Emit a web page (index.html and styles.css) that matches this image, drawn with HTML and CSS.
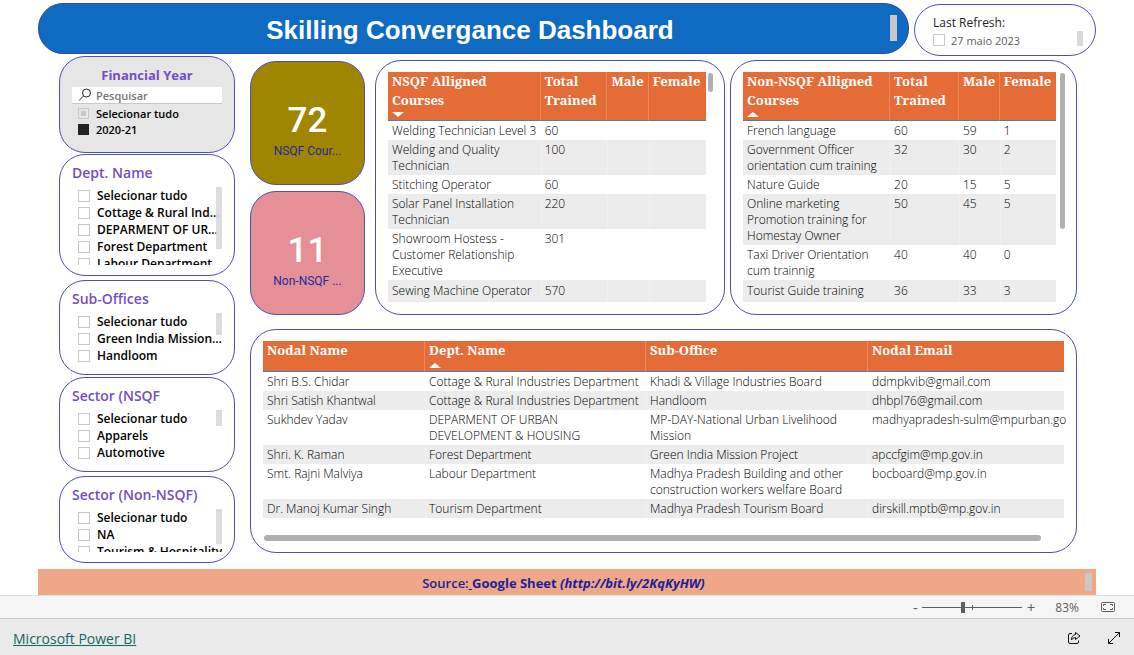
FILE: index.html
```html
<!DOCTYPE html>
<html lang="pt">
<head>
<meta charset="utf-8">
<title>Skilling Convergance Dashboard</title>
<link rel="stylesheet" href="styles.css">
</head>
<body>
<main class="report">
  <header class="top">
    <div class="title-bar"><h1>Skilling Convergance Dashboard</h1><span class="thumb title-thumb"></span></div>
    <section class="card refresh">
      <h2 class="refresh-title">Last Refresh:</h2>
      <label class="option refresh-option"><input type="checkbox" class="tick">27 maio 2023</label>
      <span class="thumb refresh-thumb"></span>
    </section>
  </header>

  <div class="content">
    <aside class="filters">
      <section class="card slicer year">
        <h2 class="slicer-title centered">Financial Year</h2>
        <div class="search">
          <svg class="search-icon" viewBox="0 0 14 14" width="14" height="14"><circle cx="8.5" cy="5" r="4" /><path d="M5.5 8 1 12.500" /></svg>
          <input type="text" placeholder="Pesquisar" aria-label="Pesquisar">
        </div>
        <label class="option"><input type="checkbox" class="tick partial"><span>Selecionar tudo</span></label>
        <label class="option"><input type="checkbox" class="tick" checked><span>2020-21</span></label>
      </section>
      <section class="card slicer dept">
        <h2 class="slicer-title">Dept. Name</h2>
        <div class="list">
          <label class="option"><input type="checkbox" class="tick"><span>Selecionar tudo</span></label>
          <label class="option"><input type="checkbox" class="tick"><span>Cottage &amp; Rural Ind...</span></label>
          <label class="option"><input type="checkbox" class="tick"><span>DEPARMENT OF UR...</span></label>
          <label class="option"><input type="checkbox" class="tick"><span>Forest Department</span></label>
          <label class="option"><input type="checkbox" class="tick"><span>Labour Department</span></label>
          <span class="thumb list-thumb tall"></span>
        </div>
      </section>
      <section class="card slicer sub">
        <h2 class="slicer-title">Sub-Offices</h2>
        <div class="list">
          <label class="option"><input type="checkbox" class="tick"><span>Selecionar tudo</span></label>
          <label class="option"><input type="checkbox" class="tick"><span>Green India Mission...</span></label>
          <label class="option"><input type="checkbox" class="tick"><span>Handloom</span></label>
          <span class="thumb list-thumb short"></span>
        </div>
      </section>
      <section class="card slicer sector">
        <h2 class="slicer-title">Sector (NSQF</h2>
        <div class="list">
          <label class="option"><input type="checkbox" class="tick"><span>Selecionar tudo</span></label>
          <label class="option"><input type="checkbox" class="tick"><span>Apparels</span></label>
          <label class="option"><input type="checkbox" class="tick"><span>Automotive</span></label>
          <span class="thumb list-thumb tiny"></span>
        </div>
      </section>
      <section class="card slicer non">
        <h2 class="slicer-title">Sector (Non-NSQF)</h2>
        <div class="list">
          <label class="option"><input type="checkbox" class="tick"><span>Selecionar tudo</span></label>
          <label class="option"><input type="checkbox" class="tick"><span>NA</span></label>
          <label class="option"><input type="checkbox" class="tick"><span>Tourism &amp; Hospitality</span></label>
          <span class="thumb list-thumb medium"></span>
        </div>
      </section>
    </aside>

    <div class="visuals">
      <div class="upper">
        <div class="kpis">
          <section class="card kpi gold"><strong>72</strong><span>NSQF Cour...</span></section>
          <section class="card kpi pink"><strong>11</strong><span>Non-NSQF ...</span></section>
        </div>
        <section class="card table-card">
          <table class="grid">
            <colgroup><col class="c1-name"><col class="c1-total"><col class="c1-male"><col class="c1-female"></colgroup>
            <thead><tr><th>NSQF Alligned Courses<i class="sort down"></i></th><th>Total Trained</th><th>Male</th><th>Female</th></tr></thead>
            <tbody>
              <tr><td class="keep">Welding Technician Level 3</td><td>60</td><td></td><td></td></tr>
              <tr><td>Welding and Quality Technician</td><td>100</td><td></td><td></td></tr>
              <tr><td>Stitching Operator</td><td>60</td><td></td><td></td></tr>
              <tr><td>Solar Panel Installation Technician</td><td>220</td><td></td><td></td></tr>
              <tr><td>Showroom Hostess - Customer Relationship Executive</td><td>301</td><td></td><td></td></tr>
              <tr><td class="keep">Sewing Machine Operator</td><td>570</td><td></td><td></td></tr>
            </tbody>
          </table>
          <span class="bar bar-short"></span>
        </section>
        <section class="card table-card second">
          <table class="grid">
            <colgroup><col class="c2-name"><col class="c2-total"><col class="c2-male"><col class="c2-female"></colgroup>
            <thead><tr><th>Non-NSQF Alligned Courses<i class="sort up"></i></th><th>Total Trained</th><th>Male</th><th>Female</th></tr></thead>
            <tbody>
              <tr><td>French language</td><td>60</td><td>59</td><td>1</td></tr>
              <tr><td>Government Officer orientation cum training</td><td>32</td><td>30</td><td>2</td></tr>
              <tr><td>Nature Guide</td><td>20</td><td>15</td><td>5</td></tr>
              <tr><td>Online marketing Promotion training for Homestay Owner</td><td>50</td><td>45</td><td>5</td></tr>
              <tr><td>Taxi Driver Orientation cum trainnig</td><td>40</td><td>40</td><td>0</td></tr>
              <tr><td>Tourist Guide training</td><td>36</td><td>33</td><td>3</td></tr>
            </tbody>
          </table>
          <span class="bar bar-long"></span>
        </section>
      </div>

      <section class="card nodal">
        <table class="grid">
          <colgroup><col class="c3-name"><col class="c3-dept"><col class="c3-sub"><col class="c3-mail"></colgroup>
          <thead><tr><th>Nodal Name</th><th>Dept. Name<i class="sort up"></i></th><th>Sub-Office</th><th>Nodal Email</th></tr></thead>
          <tbody>
            <tr><td>Shri B.S. Chidar</td><td class="keep">Cottage &amp; Rural Industries Department</td><td>Khadi &amp; Village Industries Board</td><td>ddmpkvib@gmail.com</td></tr>
            <tr><td>Shri Satish Khantwal</td><td class="keep">Cottage &amp; Rural Industries Department</td><td>Handloom</td><td>dhbpl76@gmail.com</td></tr>
            <tr><td>Sukhdev Yadav</td><td>DEPARMENT OF URBAN<br>DEVELOPMENT &amp; HOUSING</td><td>MP-DAY-National Urban Livelihood Mission</td><td class="keep">madhyapradesh-sulm@mpurban.go</td></tr>
            <tr><td>Shri. K. Raman</td><td>Forest Department</td><td>Green India Mission Project</td><td>apccfgim@mp.gov.in</td></tr>
            <tr><td>Smt. Rajni Malviya</td><td>Labour Department</td><td>Madhya Pradesh Building and other construction workers welfare Board</td><td>bocboard@mp.gov.in</td></tr>
            <tr><td>Dr. Manoj Kumar Singh</td><td>Tourism Department</td><td>Madhya Pradesh Tourism Board</td><td>dirskill.mptb@mp.gov.in</td></tr>
          </tbody>
        </table>
        <div class="hscroll"></div>
      </section>
    </div>
  </div>

  <div class="source"><p>Source:<a href="http://bit.ly/2KqKyHW"><u>&nbsp;</u><b>Google Sheet <em>(http://bit.ly/2KqKyHW)</em></b></a></p><span class="thumb source-thumb"></span></div>
</main>

<div class="zoombar">
  <button type="button" class="step" aria-label="Zoom out">-</button>
  <input type="range" class="slider" min="10" max="190" value="83" aria-label="Zoom">
  <button type="button" class="step plus" aria-label="Zoom in">+</button>
  <span class="percent">83%</span>
  <button type="button" class="icon" aria-label="Fit to page">
    <svg viewBox="0 0 14 10" width="14" height="10"><rect x=".5" y=".5" width="13" height="9" rx="1" /><path d="M5 2.500H2.500V4M2.500 6v1.500H5M9 2.500h2.500V4M11.500 6v1.500H9" /></svg>
  </button>
</div>
<footer class="footer">
  <a class="brand" href="https://powerbi.microsoft.com">Microsoft Power BI</a>
  <div class="actions">
    <button type="button" class="icon dark" aria-label="Share">
      <svg viewBox="0 0 14 14" width="14" height="14"><path d="M5 2.500H3Q1.500 2.500 1.500 4v7Q1.500 12.500 3 12.500h7q1.500 0 1.500-1.500V9.500" /><path d="M8.500 1.500 13 5 8.500 8.500V6.500Q6 6.500 4.500 9 4.500 4 8.500 3.500Z" /></svg>
    </button>
    <button type="button" class="icon dark" aria-label="Full screen">
      <svg viewBox="0 0 14 14" width="14" height="14"><path d="M1.500 12.500 12.500 1.500M8 1.500h4.500V6M1.500 8v4.500H6" /></svg>
    </button>
  </div>
</footer>
</body>
</html>
```

FILE: styles.css
```css
* { box-sizing: border-box; }

body {
  margin: 0;
  min-height: 100vh;
  display: flex;
  flex-direction: column;
  background: #fff;
  color: #252423;
  font-family: "Open Sans", "Noto Sans", sans-serif;
  font-size: 12px;
}

h1, h2, p { margin: 0; }
button { border: 0; padding: 0; background: none; font: inherit; color: inherit; }

.report { flex: 1; padding: 3px 38px 0; display: flex; flex-direction: column; }

.top { display: flex; align-items: flex-start; gap: 5px; }
.title-bar {
  flex: 1;
  height: 51px;
  display: flex;
  align-items: center;
  justify-content: center;
  position: relative;
  border: 1px solid #3a44a8;
  border-radius: 25px;
  background: #0f6bc1;
}
.title-bar h1 {
  padding-top: 3px;
  padding-right: 7px;
  color: #fff;
  font: bold 26px "Liberation Sans", Arial, sans-serif;
}

.card { position: relative; border: 1px solid #4a52b4; border-radius: 26px; }
.thumb { position: absolute; background: #d9d9d9; }
.title-thumb { right: 11px; top: 11px; width: 7px; height: 26px; background: #c8c8c8; }

.refresh { width: 182px; height: 52px; margin-top: 1px; padding: 9px 18px; }
.refresh-title { font-size: 12px; font-weight: 400; line-height: 17px; }
.refresh-option { color: #605e5c; font-size: 11px; }
.refresh-thumb { right: 12px; top: 26px; width: 6px; height: 15px; }

.content { display: flex; gap: 15px; padding: 0 19px 0 21px; }
.filters { width: 176px; display: flex; flex-direction: column; }
.slicer { padding: 9px 12px 0; }
.slicer-title {
  height: 23px;
  color: #744ec2;
  font-size: 14px;
  font-weight: 600;
  line-height: 18px;
  white-space: nowrap;
}
.centered { height: 21px; font-size: 13px; font-weight: 700; text-align: center; }
.year { height: 97px; background: #e6e6e6; }
.dept { height: 122px; margin-top: 1px; }
.sub { height: 95px; margin-top: 4px; }
.sector { height: 95px; margin-top: 2px; }
.non { height: 87px; margin-top: 4px; }

.list { position: relative; height: 54px; padding-left: 6px; overflow: hidden; }
.dept .list { height: 78px; }
.non .list { height: 43px; }
.option { display: flex; align-items: center; gap: 6px; height: 18px; white-space: nowrap; }
.slicer .option { gap: 7px; height: 17px; color: #000; font-weight: 600; }
.year .option { height: 16px; padding-left: 6px; font-size: 11px; }
.tick {
  appearance: none;
  flex: none;
  width: 12px;
  height: 12px;
  margin: 0;
  border: 1px solid #c8c8c8;
  background: #fff;
}
.year .tick { width: 11px; height: 11px; background: #e6e6e6; }
.year .tick.partial { background: #c8c8c8 content-box; padding: 2px; }
.year .tick:checked { background: #252423; border-color: #252423; }
.list-thumb { right: 0; top: 0; width: 6px; opacity: .9; }
.tall { height: 62px; }
.short { height: 22px; }
.tiny { height: 16px; }
.medium { height: 35px; }

.search { display: flex; align-items: center; gap: 4px; height: 17px; padding-left: 6px; background: #fff; border-bottom: 1px solid #c8c8c8; margin-bottom: 1px; }
.search-icon { flex: none; fill: none; stroke: #252423; }
.search input { flex: 1; min-width: 0; border: 0; padding: 0; background: none; font: 600 11px "Open Sans", sans-serif; }
.search input::placeholder { color: #767676; }

.visuals { flex: 1; min-width: 0; padding-top: 4px; display: flex; flex-direction: column; gap: 14px; }
.upper { display: grid; grid-template-columns: 120px 350fr 347fr; column-gap: 5px; }
.kpis { display: flex; flex-direction: column; gap: 6px; padding: 1px 5px 0 0; }
.kpi { flex: 1; display: flex; flex-direction: column; align-items: center; justify-content: flex-end; padding-bottom: 24px; color: #232a9b; }
.kpi strong { color: #fff; font: 500 35px/42px Roboto, sans-serif; }
.kpi span { font: 400 12px/18px Roboto, sans-serif; }
.gold { background: #a08600; }
.pink { background: #e59097; }

.table-card { height: 255px; padding: 11px 18px 0 12px; }
.second { padding-right: 20px; }

.grid { width: 100%; table-layout: fixed; border-spacing: 0; }
.grid th {
  position: relative;
  padding: 0 0 10px 4px;
  background: #e66c37;
  border-right: 1px solid #ec8a5e;
  border-bottom: 1px solid #3f7fc8;
  color: #fff;
  font: bold 13px/19px "Noto Serif", "Liberation Serif", serif;
  text-align: left;
  vertical-align: top;
}
.grid th:last-child { border-right: 0; }
.nodal th { padding-bottom: 11px; }
.grid td { padding: 2px 0 1px 4px; color: #000; font-weight: 300; line-height: 16px; vertical-align: top; }
.grid .keep { white-space: nowrap; }
.grid tbody tr:nth-child(even) { background: #ececec; }
.grid tbody tr:nth-child(even) td + td { border-left: 1px solid #f1f1f1; padding-left: 3px; }
.table-card tbody tr:last-child td { padding: 3px 0 3px 4px; }
.sort { position: absolute; left: 4px; bottom: 3px; border: 5px solid transparent; border-left-width: 6px; border-right-width: 6px; }
.down { border-top-color: #fff; border-bottom: 0; }
.up { border-bottom-color: #fff; border-top: 0; }

.c1-name { width: 48%; }
.c1-total { width: 21%; }
.c1-male { width: 13%; }
.c1-female { width: 18%; }
.c2-name { width: 47%; }
.c2-total { width: 22%; }
.c2-male { width: 13%; }
.c2-female { width: 18%; }
.c3-name { width: 162px; }
.c3-dept { width: 221px; }
.c3-sub { width: 222px; }

.bar { position: absolute; right: 11px; top: 12px; width: 5px; border-radius: 3px; background: #b0b0ae; }
.bar-short { height: 19px; }
.bar-long { height: 156px; }

.nodal { height: 224px; padding: 11px 12px 0; }
.hscroll { width: 97%; height: 6px; margin-top: 17px; margin-left: 1px; border-radius: 3px; background: #b0b0ae; }

.source {
  position: relative;
  display: flex;
  align-items: center;
  justify-content: center;
  height: 26px;
  margin-top: auto;
  padding-top: 2px;
  padding-right: 7px;
  background: #f0a787;
  color: #1a1f9c;
  font-size: 13px;
  font-weight: 600;
}
.source b { font-weight: 700; }
.source a { color: inherit; text-decoration: none; }
.source-thumb { right: 4px; top: 4px; width: 7px; height: 18px; background: #c8c8c8; }

.zoombar {
  display: flex;
  align-items: center;
  justify-content: flex-end;
  height: 24px;
  padding-right: 19px;
  background: #f5f5f5;
  border-top: 1px solid #e1dfdd;
  border-bottom: 1px solid #c8c8c8;
  color: #605e5c;
}
.step { font-size: 15px; line-height: 20px; }
.plus { margin-left: 5px; }
.slider {
  appearance: none;
  width: 100px;
  height: 12px;
  margin: 0 0 0 4px;
  background:
    linear-gradient(#605e5c, #605e5c) 50px center / 1px 5px no-repeat,
    linear-gradient(#605e5c, #605e5c) center / 100% 1px no-repeat;
}
.slider::-webkit-slider-thumb { appearance: none; width: 4px; height: 11px; background: #605e5c; }
.percent { margin: 0 22px 0 20px; }
.icon { display: flex; }
.icon svg { fill: none; stroke: #605e5c; }
.dark svg { stroke: #111; }

.footer { display: flex; align-items: center; justify-content: space-between; height: 36px; padding: 2px 13px 0; background: #eaeaea; }
.brand { color: #13675f; font-size: 14px; }
.actions { display: flex; gap: 26px; }
```
